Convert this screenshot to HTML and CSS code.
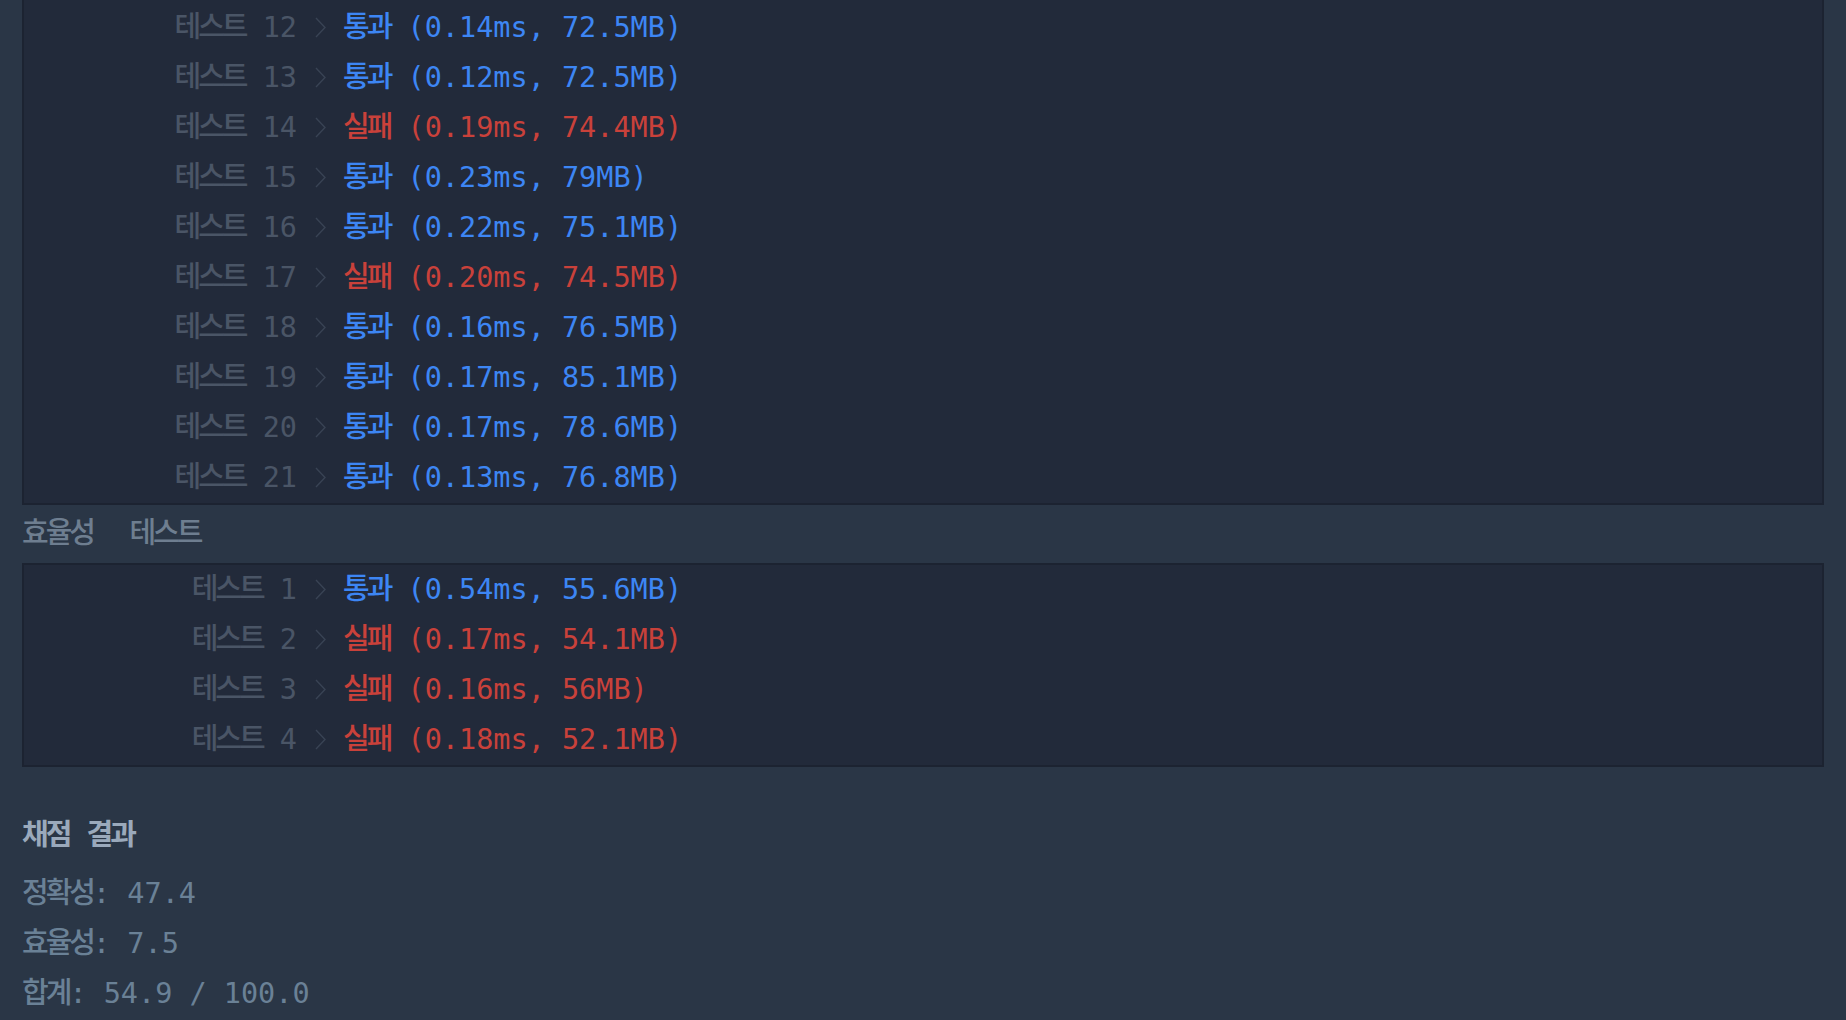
FILE: index.html
```html
<!DOCTYPE html>
<html lang="ko">
<head>
<meta charset="utf-8">
<title>채점 결과</title>
<link rel="stylesheet" href="styles.css">
</head>
<body>
<main class="page">
  <section class="result-box result-box--scrolled">
    <div class="row"><span class="label"><span class="ko">테스트</span> 12</span><svg class="chev" viewBox="0 0 11 21"><polyline points="1,1 10,10.5 1,20"/></svg><span class="res pass"><span class="ko">통과</span> (0.14ms, 72.5MB)</span></div>
    <div class="row"><span class="label"><span class="ko">테스트</span> 13</span><svg class="chev" viewBox="0 0 11 21"><polyline points="1,1 10,10.5 1,20"/></svg><span class="res pass"><span class="ko">통과</span> (0.12ms, 72.5MB)</span></div>
    <div class="row"><span class="label"><span class="ko">테스트</span> 14</span><svg class="chev" viewBox="0 0 11 21"><polyline points="1,1 10,10.5 1,20"/></svg><span class="res fail"><span class="ko">실패</span> (0.19ms, 74.4MB)</span></div>
    <div class="row"><span class="label"><span class="ko">테스트</span> 15</span><svg class="chev" viewBox="0 0 11 21"><polyline points="1,1 10,10.5 1,20"/></svg><span class="res pass"><span class="ko">통과</span> (0.23ms, 79MB)</span></div>
    <div class="row"><span class="label"><span class="ko">테스트</span> 16</span><svg class="chev" viewBox="0 0 11 21"><polyline points="1,1 10,10.5 1,20"/></svg><span class="res pass"><span class="ko">통과</span> (0.22ms, 75.1MB)</span></div>
    <div class="row"><span class="label"><span class="ko">테스트</span> 17</span><svg class="chev" viewBox="0 0 11 21"><polyline points="1,1 10,10.5 1,20"/></svg><span class="res fail"><span class="ko">실패</span> (0.20ms, 74.5MB)</span></div>
    <div class="row"><span class="label"><span class="ko">테스트</span> 18</span><svg class="chev" viewBox="0 0 11 21"><polyline points="1,1 10,10.5 1,20"/></svg><span class="res pass"><span class="ko">통과</span> (0.16ms, 76.5MB)</span></div>
    <div class="row"><span class="label"><span class="ko">테스트</span> 19</span><svg class="chev" viewBox="0 0 11 21"><polyline points="1,1 10,10.5 1,20"/></svg><span class="res pass"><span class="ko">통과</span> (0.17ms, 85.1MB)</span></div>
    <div class="row"><span class="label"><span class="ko">테스트</span> 20</span><svg class="chev" viewBox="0 0 11 21"><polyline points="1,1 10,10.5 1,20"/></svg><span class="res pass"><span class="ko">통과</span> (0.17ms, 78.6MB)</span></div>
    <div class="row"><span class="label"><span class="ko">테스트</span> 21</span><svg class="chev" viewBox="0 0 11 21"><polyline points="1,1 10,10.5 1,20"/></svg><span class="res pass"><span class="ko">통과</span> (0.13ms, 76.8MB)</span></div>
  </section>

  <h3 class="section-title"><span class="ko">효율성</span>  <span class="ko">테스트</span></h3>

  <section class="result-box">
    <div class="row"><span class="label"><span class="ko">테스트</span> 1</span><svg class="chev" viewBox="0 0 11 21"><polyline points="1,1 10,10.5 1,20"/></svg><span class="res pass"><span class="ko">통과</span> (0.54ms, 55.6MB)</span></div>
    <div class="row"><span class="label"><span class="ko">테스트</span> 2</span><svg class="chev" viewBox="0 0 11 21"><polyline points="1,1 10,10.5 1,20"/></svg><span class="res fail"><span class="ko">실패</span> (0.17ms, 54.1MB)</span></div>
    <div class="row"><span class="label"><span class="ko">테스트</span> 3</span><svg class="chev" viewBox="0 0 11 21"><polyline points="1,1 10,10.5 1,20"/></svg><span class="res fail"><span class="ko">실패</span> (0.16ms, 56MB)</span></div>
    <div class="row"><span class="label"><span class="ko">테스트</span> 4</span><svg class="chev" viewBox="0 0 11 21"><polyline points="1,1 10,10.5 1,20"/></svg><span class="res fail"><span class="ko">실패</span> (0.18ms, 52.1MB)</span></div>
  </section>

  <h2 class="score-title"><span class="ko">채점</span> <span class="ko">결과</span></h2>
  <p class="score-line"><span class="ko">정확성</span>: 47.4</p>
  <p class="score-line"><span class="ko">효율성</span>: 7.5</p>
  <p class="score-line"><span class="ko">합계</span>: 54.9 / 100.0</p>
</main>
</body>
</html>
```

FILE: styles.css
```css
html, body {
  margin: 0;
  padding: 0;
  background: #2a3646;
}

body {
  font-family: "DejaVu Sans Mono", "Noto Sans CJK KR", monospace;
  font-size: 28.5px;
  color: #6c8296;
}

.page {
  padding: 0 22px;
  height: 1020px;
  overflow: hidden;
}

.ko {
  font-family: "Noto Sans CJK KR", sans-serif;
  font-size: 29px;
  font-weight: 500;
  letter-spacing: -3px;
  line-height: 1;
}

.result-box {
  background: #222a3a;
  border: 2px solid #1c2331;
}

.result-box--scrolled {
  border-top: 0;
  padding-top: 3px;
}

.row {
  display: grid;
  grid-template-columns: 273px 46px auto;
  align-items: center;
  height: 50px;
  line-height: 50px;
  white-space: pre;
}

.label {
  text-align: right;
  color: #4a5566;
}

.chev {
  width: 11px;
  height: 21px;
  margin-left: 18px;
  margin-top: -2px;
  fill: none;
  stroke: #394354;
  stroke-width: 1.4;
}

.res.pass {
  color: #3d86f4;
}

.res.fail {
  color: #c9413a;
}

.section-title {
  margin: 0;
  font-size: 28.5px;
  font-weight: normal;
  line-height: 58px;
  height: 58px;
  color: #6e7e90;
  white-space: pre;
  word-spacing: 1px;
}

.score-title {
  margin: 44px 0 8px;
  font-size: 28.5px;
  font-weight: normal;
  line-height: 50px;
  height: 50px;
  color: #9aa9bb;
  white-space: pre;
}

.score-title .ko {
  font-weight: 700;
}

.score-line {
  margin: 0;
  line-height: 50px;
  height: 50px;
  white-space: pre;
  color: #6a8196;
}
```
